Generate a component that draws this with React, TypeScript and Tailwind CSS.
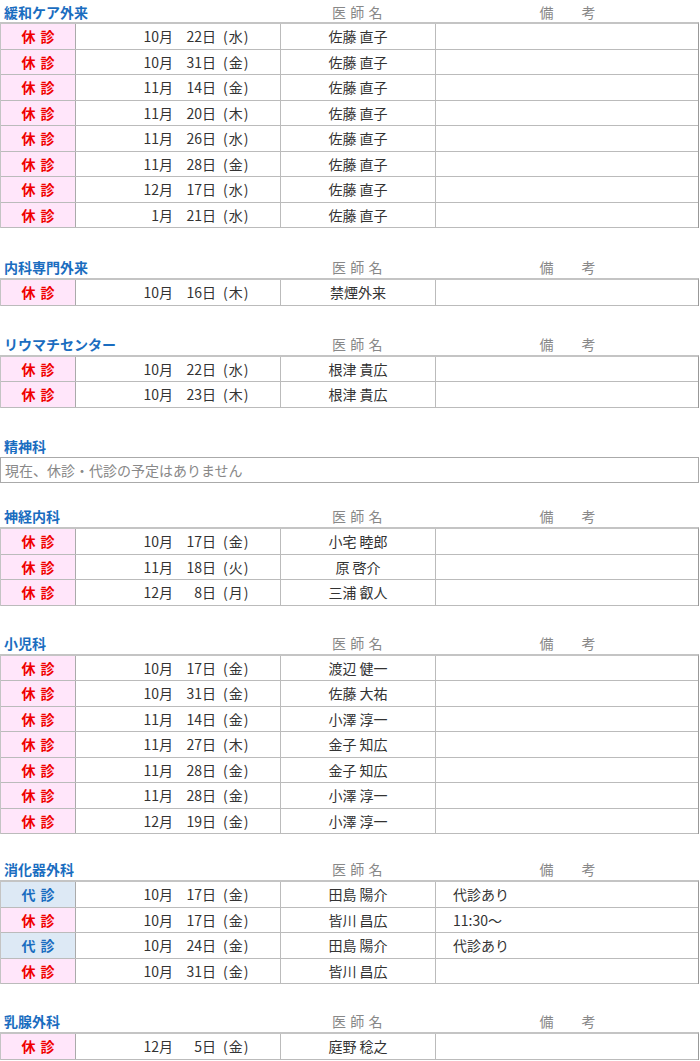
type Row = { kind: '休' | '代'; m: string; d: string; w: string; doc: string; note?: string };
type Section = { title: string; gap: string; rows: Row[] | null };

const r = (kind: '休' | '代', m: string, d: string, w: string, doc: string, note?: string): Row => ({ kind, m, d, w, doc, note });

// gap = space above each block (the source page is not perfectly even)
const sections: Section[] = [
  {
    title: '緩和ケア外来',
    gap: 'mt-0',
    rows: [
      r('休', '10', '22', '水', '佐藤 直子'),
      r('休', '10', '31', '金', '佐藤 直子'),
      r('休', '11', '14', '金', '佐藤 直子'),
      r('休', '11', '20', '木', '佐藤 直子'),
      r('休', '11', '26', '水', '佐藤 直子'),
      r('休', '11', '28', '金', '佐藤 直子'),
      r('休', '12', '17', '水', '佐藤 直子'),
      r('休', '1', '21', '水', '佐藤 直子'),
    ],
  },
  { title: '内科専門外来', gap: 'mt-[26px]', rows: [r('休', '10', '16', '木', '禁煙外来')] },
  {
    title: 'リウマチセンター',
    gap: 'mt-[25px]',
    rows: [r('休', '10', '22', '水', '根津 貴広'), r('休', '10', '23', '木', '根津 貴広')],
  },
  { title: '精神科', gap: 'mt-[25.5px]', rows: null },
  {
    title: '神経内科',
    gap: 'mt-[20px]',
    rows: [
      r('休', '10', '17', '金', '小宅 睦郎'),
      r('休', '11', '18', '火', '原 啓介'),
      r('休', '12', '8', '月', '三浦 叡人'),
    ],
  },
  {
    title: '小児科',
    gap: 'mt-[24px]',
    rows: [
      r('休', '10', '17', '金', '渡辺 健一'),
      r('休', '10', '31', '金', '佐藤 大祐'),
      r('休', '11', '14', '金', '小澤 淳一'),
      r('休', '11', '27', '木', '金子 知広'),
      r('休', '11', '28', '金', '金子 知広'),
      r('休', '11', '28', '金', '小澤 淳一'),
      r('休', '12', '19', '金', '小澤 淳一'),
    ],
  },
  {
    title: '消化器外科',
    gap: 'mt-[22px]',
    rows: [
      r('代', '10', '17', '金', '田島 陽介', '代診あり'),
      r('休', '10', '17', '金', '皆川 昌広', '11:30～'),
      r('代', '10', '24', '金', '田島 陽介', '代診あり'),
      r('休', '10', '31', '金', '皆川 昌広'),
    ],
  },
  { title: '乳腺外科', gap: 'mt-[24px]', rows: [r('休', '12', '5', '金', '庭野 稔之')] },
];

const cols = 'grid grid-cols-[75px_205px_155px_1fr]';

function Heading({ title, showCols, first }: { title: string; showCols: boolean; first: boolean }) {
  return (
    <div className={`${cols} items-center ${first ? 'h-[22px] pt-[2px]' : 'h-[24px] pt-[2px]'}`}>
      <div className="col-span-2 pl-[4px] text-[14px] font-bold text-[#1a6dc0] leading-none">{title}</div>
      {showCols && (
        <>
          <div className="text-center text-[14px] text-[#888] leading-none tracking-[0.5px]">医 師 名</div>
          <div className="text-center text-[14px] text-[#888] leading-none">
            備<span className="inline-block w-[28px]" />考
          </div>
        </>
      )}
    </div>
  );
}

function ScheduleRow({ row }: { row: Row }) {
  const isDai = row.kind === '代';
  return (
    <div className={`${cols} h-[25.5px] border-b border-[#bbb] text-[14px] leading-none text-[#333]`}>
      <div
        className={`flex items-center justify-center border-r border-[#aaa] font-bold ${
          isDai ? 'bg-[#dde9f5] text-[#1a6dc0]' : 'bg-[#ffe6fa] text-[#f00000]'
        }`}
      >
        {isDai ? '代' : '休'}
        <span className="inline-block w-[5px]" />診
      </div>
      <div className="flex items-center border-r border-[#bbb]">
        <span className="w-[97px] text-right">{row.m}月</span>
        <span className="w-[43px] text-right">{row.d}日</span>
        <span className="ml-[7px] tracking-[1px]">({row.w})</span>
      </div>
      <div className="flex items-center justify-center border-r border-[#bbb]">{row.doc}</div>
      <div className="flex items-center pl-[17px]">{row.note ?? ''}</div>
    </div>
  );
}

export default function App() {
  return (
    <div className="w-[700px] bg-white pb-[2px]" style={{ fontFamily: "'Noto Sans CJK JP', 'Noto Sans', sans-serif" }}>
      {sections.map((s, i) => (
        <div key={s.title} className={s.gap}>
          <Heading title={s.title} showCols={s.rows !== null} first={i === 0} />
          {s.rows ? (
            <div className="w-[699px] border-x border-t-2 border-[#c4c4c4] border-r-[#999]">
              {s.rows.map((row, j) => (
                <ScheduleRow key={j} row={row} />
              ))}
            </div>
          ) : (
            <div className="flex h-[26px] w-[699px] items-center border border-[#aaa] pl-[4px] text-[14px] leading-none text-[#888]">
              現在、休診・代診の予定はありません
            </div>
          )}
        </div>
      ))}
    </div>
  );
}
